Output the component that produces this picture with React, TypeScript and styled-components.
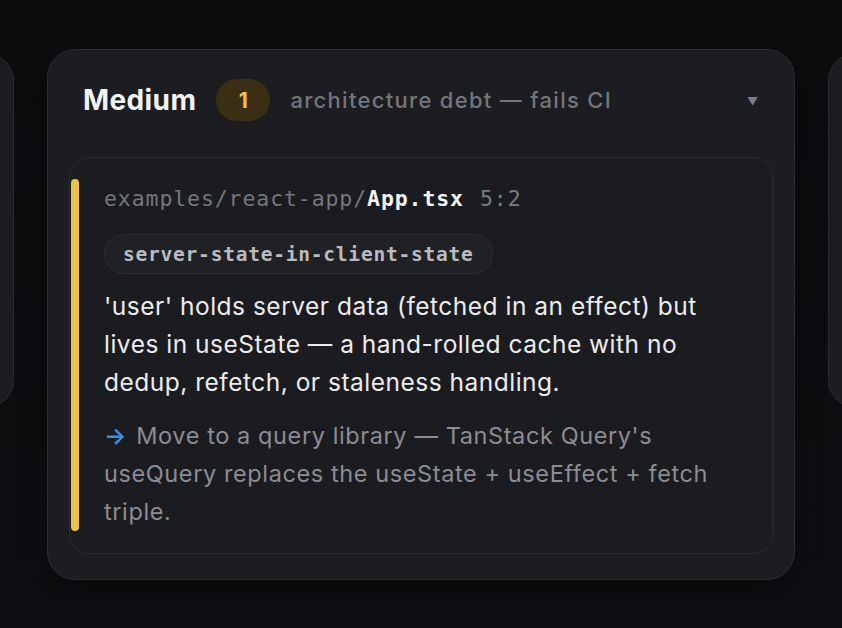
import React from "react";
import styled, { createGlobalStyle } from "styled-components";

const Global = createGlobalStyle`
  html, body { margin: 0; padding: 0; background: #0d0e10; }
  body { font-family: Inter, "Noto Sans", sans-serif; -webkit-font-smoothing: antialiased; }
  #root { width: 842px; height: 628px; overflow: hidden; }
`;

const Stage = styled.div`
  width: 842px;
  height: 628px;
  overflow: hidden;
  display: flex;
  justify-content: center;
  align-items: flex-start;
  gap: 33px;
  padding-top: 49px;
  box-sizing: border-box;
  background: linear-gradient(180deg, #0b0c0e 0%, #0e0f12 100%);
`;

const SideCard = styled.div`
  flex: 0 0 748px;
  height: 355px;
  margin-top: 4px;
  box-sizing: border-box;
  border-radius: 28px;
  border: 1px solid #2a2c31;
  background: #1c1d21;
`;

const Card = styled.section`
  flex: 0 0 748px;
  box-sizing: border-box;
  border-radius: 28px;
  border: 1px solid #2b2d32;
  background: #1c1d21;
  padding: 29px 21px 25px;
  box-shadow: 0 10px 30px rgba(0, 0, 0, 0.45);
`;

const Header = styled.header`
  display: flex;
  align-items: center;
  height: 42px;
  padding: 0 15px 0 14px;
  margin-bottom: 36px;
`;

const Title = styled.h2`
  margin: 0;
  font-size: 28px;
  font-weight: 700;
  color: #f2f2f3;
  letter-spacing: 0.4px;
`;

const CountBadge = styled.span`
  margin-left: 20px;
  width: 54px;
  height: 42px;
  border-radius: 21px;
  background: #3a2f13;
  color: #f2c14b;
  font-size: 21px;
  font-weight: 700;
  display: flex;
  align-items: center;
  justify-content: center;
`;

const Subtitle = styled.span`
  margin-left: 20px;
  font-size: 22px;
  font-weight: 500;
  letter-spacing: 1.3px;
  color: #74767c;
  flex: 1;
`;

const Caret = styled.span`
  color: #7b7d83;
  font-size: 11px;
  line-height: 1;
  margin-top: 3px;
`;

const Finding = styled.article`
  display: flex;
  border: 1px solid #292b30;
  border-radius: 20px;
  background: #1b1c20;
  padding: 21px 28px 22px 1px;
`;

const SeverityBar = styled.div<{ $color: string }>`
  flex: 0 0 8px;
  border-radius: 4px;
  background: ${(p) => p.$color};
`;

const Body = styled.div`
  margin-left: 25px;
  display: flex;
  flex-direction: column;
  align-items: flex-start;
`;

const Location = styled.div`
  margin-top: 5px;
  font-family: "DejaVu Sans Mono", "Liberation Mono", monospace;
  font-size: 21.5px;
  line-height: 30px;
  letter-spacing: 0.9px;
  color: #75777c;
`;

const FileName = styled.strong`
  color: #f4f4f5;
  font-weight: 700;
`;

const Pos = styled.span`
  margin-left: 16px;
  color: #7a7c81;
`;

const RulePill = styled.span`
  margin-top: 20px;
  height: 40px;
  box-sizing: border-box;
  padding: 0 18px;
  display: inline-flex;
  align-items: center;
  border-radius: 20px;
  border: 1px solid #2c2e33;
  background: #202125;
  font-family: "DejaVu Sans Mono", "Liberation Mono", monospace;
  font-size: 19.5px;
  font-weight: 700;
  letter-spacing: 0.78px;
  color: #b9bbbf;
`;

const Message = styled.p`
  margin: 13px 0 0;
  font-size: 24.5px;
  letter-spacing: 0.5px;
  line-height: 38px;
  color: #ececee;
`;

const Fix = styled.p`
  margin: 16px 0 0;
  font-size: 23.5px;
  letter-spacing: 0.6px;
  line-height: 38px;
  color: #8b8d92;
`;

const Arrow = styled.span`
  display: inline-block;
  color: #3b8ee8;
  font-weight: 600;
  margin-right: 2px;
`;

export default function App() {
  return (
    <>
      <Global />
      <Stage>
        <SideCard />
        <Card>
          <Header>
            <Title>Medium</Title>
            <CountBadge>1</CountBadge>
            <Subtitle>architecture debt — fails CI</Subtitle>
            <Caret>▼</Caret>
          </Header>
          <Finding>
            <SeverityBar $color="#f0c048" />
            <Body>
              <Location>
                examples/react-app/<FileName>App.tsx</FileName>
                <Pos>5:2</Pos>
              </Location>
              <RulePill>server-state-in-client-state</RulePill>
              <Message>
                'user' holds server data (fetched in an effect) but lives in useState — a hand-rolled cache with no
                dedup, refetch, or staleness handling.
              </Message>
              <Fix>
                <Arrow>→</Arrow> Move to a query library — TanStack Query's useQuery replaces the useState + useEffect +
                fetch triple.
              </Fix>
            </Body>
          </Finding>
        </Card>
        <SideCard />
      </Stage>
    </>
  );
}
